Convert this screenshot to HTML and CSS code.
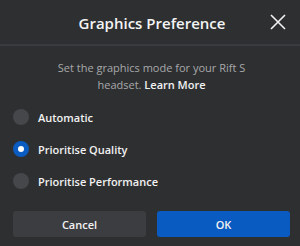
FILE: index.html
```html
<!DOCTYPE html>
<html lang="en">
<head>
    <meta charset="UTF-8">
    <title>Graphics Preference</title>
    <link rel="stylesheet" href="styles.css">
</head>
<body>

    <div class="dialog">
        <div class="header">
            <h1>Graphics Preference</h1>
            <button class="close" aria-label="Close">
                <svg width="16" height="16" viewBox="0 0 16 16">
                    <path d="M1 1 L15 15 M15 1 L1 15" stroke="#f2f2f2" stroke-width="1.6" fill="none"/>
                </svg>
            </button>
        </div>

        <p class="desc">Set the graphics mode for your Rift S headset. <a href="#" class="learn">Learn More</a></p>

        <div class="options">
            <label class="option">
                <span class="radio"></span>
                <span>Automatic</span>
            </label>
            <label class="option">
                <span class="radio checked"></span>
                <span>Prioritise Quality</span>
            </label>
            <label class="option">
                <span class="radio"></span>
                <span>Prioritise Performance</span>
            </label>
        </div>

        <div class="actions">
            <button class="btn">Cancel</button>
            <button class="btn primary">OK</button>
        </div>
    </div>

</body>
</html>
```

FILE: styles.css
```css
body {
    margin: 0;
    font-family: 'Open Sans', Arial, sans-serif;
    background-color: #2e2f31;
    color: #f2f2f2;
}

.dialog {
    width: 300px;
    height: 246px;
    box-sizing: border-box;
    padding: 0 10px 0 13px;
    display: flex;
    flex-direction: column;
}

.header {
    height: 44px;
    margin: 0 -10px 0 -13px;
    border-bottom: 2px solid #3a3b3e;
    display: flex;
    align-items: center;
    justify-content: center;
    position: relative;
}

h1 {
    margin: 1px 0 0 4px;
    font-size: 15px;
    font-weight: 600;
    color: #f4f4f4;
}

.close {
    position: absolute;
    right: 14px;
    top: 14px;
    width: 16px;
    height: 16px;
    padding: 0;
    border: none;
    background: none;
}

.desc {
    margin: 13px 40px 0 40px;
    font-size: 11px;
    line-height: 17px;
    text-align: center;
    color: #a8a9ab;
}

.learn {
    display: inline-block;
    color: #f2f2f2;
    font-weight: 600;
    text-decoration: none;
}

.options {
    margin-top: 16px;
    display: flex;
    flex-direction: column;
    gap: 16px;
}

.option {
    display: flex;
    align-items: center;
    gap: 9px;
    height: 16px;
    font-size: 11px;
    font-weight: 600;
    color: #f2f2f2;
}

.radio {
    width: 16px;
    height: 16px;
    border-radius: 50%;
    background: #46474a;
    box-sizing: border-box;
    flex-shrink: 0;
}

.radio.checked {
    background: #fff;
    border: 5px solid #0b5cc0;
}

.actions {
    margin-top: auto;
    margin-bottom: 9px;
    display: flex;
    gap: 11px;
}

.btn {
    flex: 1;
    height: 26px;
    border: none;
    border-radius: 3px;
    background: #3c3d40;
    color: #f2f2f2;
    font-family: 'Open Sans', Arial, sans-serif;
    font-size: 11px;
    font-weight: 600;
}

.btn.primary {
    background: #0a5bc1;
}
```
